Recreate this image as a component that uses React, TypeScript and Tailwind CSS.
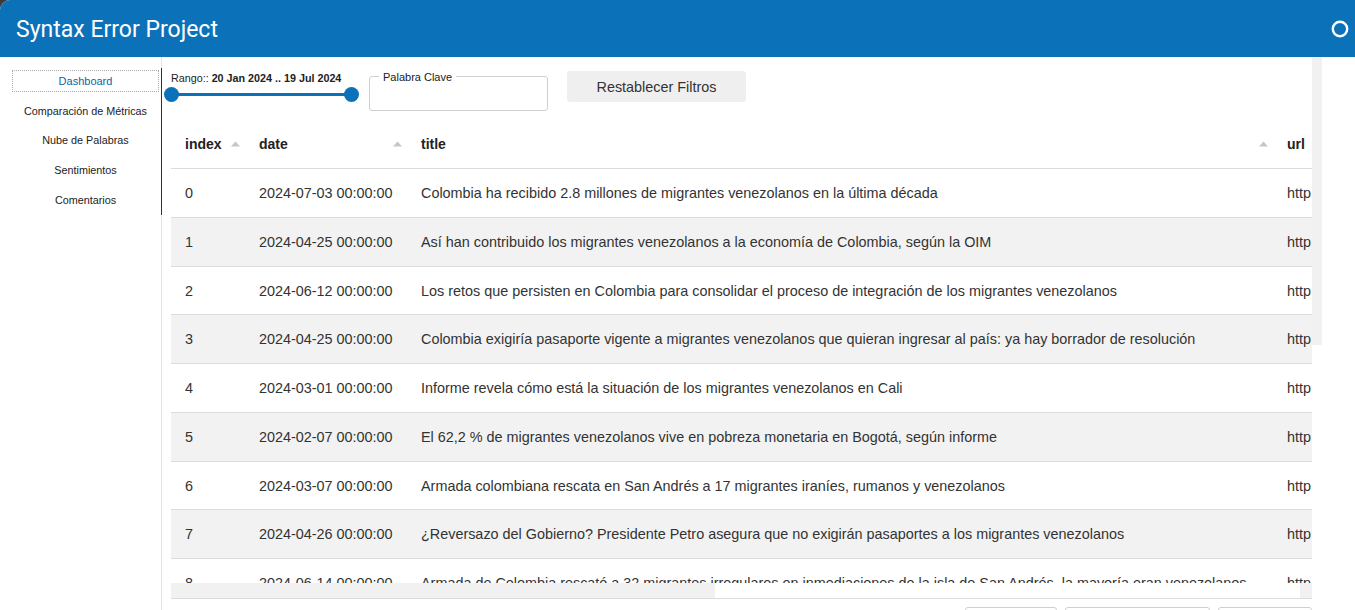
import React from "react";

type Row = { index: number; date: string; title: string };

const rows: Row[] = [
  { index: 0, date: "2024-07-03 00:00:00", title: "Colombia ha recibido 2.8 millones de migrantes venezolanos en la última década" },
  { index: 1, date: "2024-04-25 00:00:00", title: "Así han contribuido los migrantes venezolanos a la economía de Colombia, según la OIM" },
  { index: 2, date: "2024-06-12 00:00:00", title: "Los retos que persisten en Colombia para consolidar el proceso de integración de los migrantes venezolanos" },
  { index: 3, date: "2024-04-25 00:00:00", title: "Colombia exigiría pasaporte vigente a migrantes venezolanos que quieran ingresar al país: ya hay borrador de resolución" },
  { index: 4, date: "2024-03-01 00:00:00", title: "Informe revela cómo está la situación de los migrantes venezolanos en Cali" },
  { index: 5, date: "2024-02-07 00:00:00", title: "El 62,2 % de migrantes venezolanos vive en pobreza monetaria en Bogotá, según informe" },
  { index: 6, date: "2024-03-07 00:00:00", title: "Armada colombiana rescata en San Andrés a 17 migrantes iraníes, rumanos y venezolanos" },
  { index: 7, date: "2024-04-26 00:00:00", title: "¿Reversazo del Gobierno? Presidente Petro asegura que no exigirán pasaportes a los migrantes venezolanos" },
  { index: 8, date: "2024-06-14 00:00:00", title: "Armada de Colombia rescató a 32 migrantes irregulares en inmediaciones de la isla de San Andrés, la mayoría eran venezolanos" },
];

const navItems = ["Comparación de Métricas", "Nube de Palabras", "Sentimientos", "Comentarios"];

// flechita de orden de la cabecera
const SortArrow = () => (
  <svg width="9" height="6" viewBox="0 0 9 6" className="shrink-0">
    <path d="M0 5.5 L4.5 0.5 L9 5.5 Z" fill="#c6c6c6" />
  </svg>
);

const HeaderCell: React.FC<{ label: string; width: string; arrow?: boolean }> = ({ label, width, arrow = true }) => (
  <div className={`${width} shrink-0 h-full flex items-center justify-between pl-[14px] pr-[5px]`}>
    <span className="font-bold text-[14px] text-[#222]">{label}</span>
    {arrow && <SortArrow />}
  </div>
);

export default function App() {
  return (
    <div className="w-[1355px] h-[610px] overflow-hidden bg-[#3b3b3b] font-['Liberation_Sans',Arial,sans-serif]">
      <div className="w-full h-full rounded-tl-[10px] overflow-hidden bg-white flex flex-col">
        {/* barra superior */}
        <header className="h-[57px] shrink-0 bg-[#0b71b8] flex items-center justify-between pl-[16px] pr-[6px]">
          <h1 className="text-white text-[23px] font-['Roboto',sans-serif] font-normal leading-none mt-[1px]">
            Syntax Error Project
          </h1>
          <svg width="18" height="18" viewBox="0 0 18 18" className="mt-[1px]">
            <circle cx="9" cy="9" r="7.2" fill="none" stroke="white" strokeWidth="2.4" />
          </svg>
        </header>

        <div className="flex flex-1 min-h-0">
          {/* menú lateral */}
          <aside className="w-[162px] shrink-0 flex flex-col">
            <div className="h-[11px] border-r border-[#e4e4e4]" />
            <nav className="border-r border-[#333] pl-[12px] pr-[2px] pt-[2px] pb-[4px] flex flex-col gap-[7.7px]">
              <div className="h-[22px] border border-dotted border-[#a9a9a9] flex items-center justify-center text-[11px] text-[#0d65a9]">
                Dashboard
              </div>
              {navItems.map((item) => (
                <div key={item} className="h-[22px] flex items-center justify-center text-[10.8px] text-[#222]">
                  {item}
                </div>
              ))}
            </nav>
            <div className="flex-1 border-r border-[#e4e4e4]" />
          </aside>

          {/* contenido */}
          <main className="flex-1 flex pl-[9px] pr-[33px] min-w-0">
            <div className="flex-1 flex flex-col min-w-0">
              {/* filtros */}
              <div className="h-[63px] shrink-0 flex items-start">
                <div className="w-[180px] mt-[15px]">
                  <div className="text-[10.75px] leading-[13px] text-[#222] whitespace-nowrap">
                    Rango:: <span className="font-bold">20 Jan 2024 .. 19 Jul 2024</span>
                  </div>
                  <div className="relative h-[15px] mt-[1.5px]">
                    <div className="absolute left-0 right-0 top-[6px] h-[3px] bg-[#0b71b8]" />
                    <div className="absolute left-[-7.5px] top-0 w-[15px] h-[15px] rounded-full bg-[#0b71b8]" />
                    <div className="absolute right-[-7.5px] top-0 w-[15px] h-[15px] rounded-full bg-[#0b71b8]" />
                  </div>
                </div>

                <div className="relative ml-[18px] mt-[19px] w-[179px] h-[35px] border border-[#cfcfcf] rounded-[3px]">
                  <span className="absolute left-[9px] top-[-6px] bg-white px-[4px] text-[11px] leading-[13px] text-[#222]">
                    Palabra Clave
                  </span>
                </div>

                <button className="ml-[19px] mt-[14px] w-[179px] h-[31px] pt-[2px] bg-[#efefef] rounded-[3px] text-[14.4px] text-[#333]">
                  Restablecer Filtros
                </button>
              </div>

              {/* tabla */}
              <div className="h-[479px] shrink-0 flex flex-col border-b border-[#dcdcdc]">
                <div className="h-[463px] overflow-hidden">
                  <div className="w-[1202px]">
                    <div className="h-[49px] flex border-b border-[#dcdcdc]">
                      <HeaderCell label="index" width="w-[74px]" />
                      <HeaderCell label="date" width="w-[162px]" />
                      <HeaderCell label="title" width="w-[866px]" />
                      <HeaderCell label="url" width="w-[100px]" arrow={false} />
                    </div>
                    {rows.map((r) => (
                      <div
                        key={r.index}
                        className={`h-[48.75px] pt-[2px] flex items-center border-b border-[#dcdcdc] text-[14.4px] text-[#333] whitespace-nowrap ${
                          r.index % 2 === 1 ? "bg-[#f2f2f2]" : "bg-white"
                        }`}
                      >
                        <div className="w-[74px] shrink-0 pl-[14px]">{r.index}</div>
                        <div className="w-[162px] shrink-0 pl-[14px]">{r.date}</div>
                        <div className="w-[866px] shrink-0 pl-[14px] overflow-hidden">{r.title}</div>
                        <div className="w-[100px] shrink-0 pl-[14px]">http</div>
                      </div>
                    ))}
                  </div>
                </div>
                {/* barra de desplazamiento horizontal */}
                <div className="h-[15px] flex">
                  <div className="w-[544px] bg-[#f1f1f1]" />
                  <div className="flex-1 bg-white" />
                  <div className="w-[12px] bg-[#f1f1f1]" />
                </div>
              </div>

              {/* paginación */}
              <div className="flex justify-end gap-[8px] mt-[8px]">
                <div className="w-[92px] h-[30px] border border-[#cfcfcf] rounded-[3px]" />
                <div className="w-[145px] h-[30px] border border-[#cfcfcf] rounded-[3px]" />
                <div className="w-[94px] h-[30px] border border-[#cfcfcf] rounded-[3px]" />
              </div>
            </div>

            {/* barra de desplazamiento vertical */}
            <div className="w-[10px] shrink-0">
              <div className="h-[288px] bg-[#f1f1f1]" />
            </div>
          </main>
        </div>
      </div>
    </div>
  );
}
